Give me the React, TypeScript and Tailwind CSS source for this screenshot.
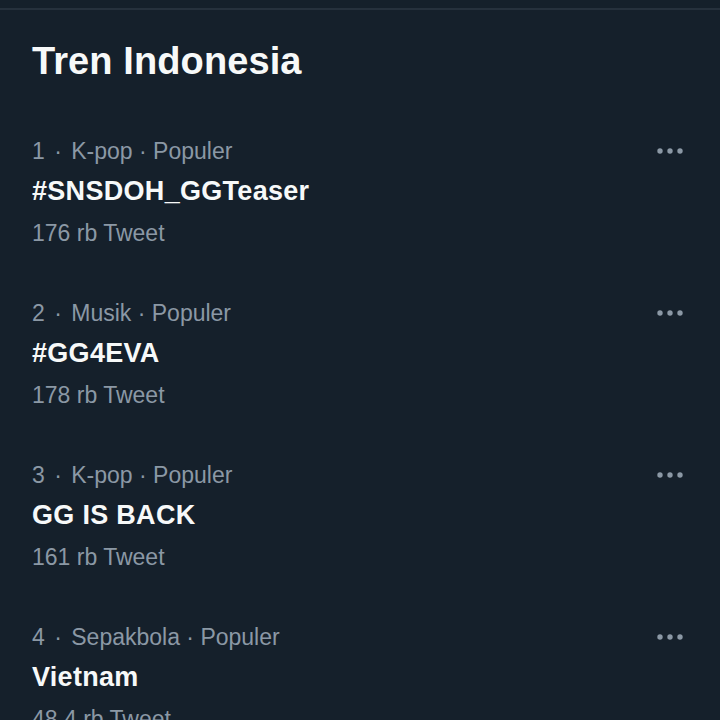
import React from "react";

const items = [
  { n: "1", cat: "K-pop", title: "#SNSDOH_GGTeaser", count: "176 rb Tweet" },
  { n: "2", cat: "Musik", title: "#GG4EVA", count: "178 rb Tweet" },
  { n: "3", cat: "K-pop", title: "GG IS BACK", count: "161 rb Tweet" },
  { n: "4", cat: "Sepakbola", title: "Vietnam", count: "48,4 rb Tweet" },
];

function Dots() {
  return (
    <svg width="26" height="6" viewBox="0 0 26 6" className="mt-[12px] shrink-0">
      <circle cx="3" cy="3" r="2.7" fill="#8b98a5" />
      <circle cx="13" cy="3" r="2.7" fill="#8b98a5" />
      <circle cx="23" cy="3" r="2.7" fill="#8b98a5" />
    </svg>
  );
}

export default function App() {
  return (
    <div
      className="w-[720px] h-[720px] overflow-hidden bg-[#15202b]"
      style={{ fontFamily: '"Liberation Sans", Arial, sans-serif' }}
    >
      <div className="h-2" />
      <div className="h-[2px] bg-[#26313d]" />
      <div className="px-8 pt-[28px] pb-[36px]">
        <h1 className="text-[38px] leading-[46px] font-bold text-[#f7f9f9] tracking-[0.1px]">Tren Indonesia</h1>
      </div>
      <div className="flex flex-col">
        {items.map((it) => (
          <div key={it.n} className="flex justify-between pl-8 pr-[37px] pt-[16px] pb-[34px]">
            <div className="flex flex-col">
              <div className="text-[23px] leading-[30px] text-[#8b98a5]">
                {it.n} <span className="mx-[3px]">·</span> {it.cat} · Populer
              </div>
              <div className="text-[27px] leading-[32px] mt-[9px] font-bold text-[#f7f9f9] tracking-[0.3px]">{it.title}</div>
              <div className="text-[23px] leading-[30px] mt-[11px] text-[#8b98a5]">{it.count}</div>
            </div>
            <Dots />
          </div>
        ))}
      </div>
    </div>
  );
}
